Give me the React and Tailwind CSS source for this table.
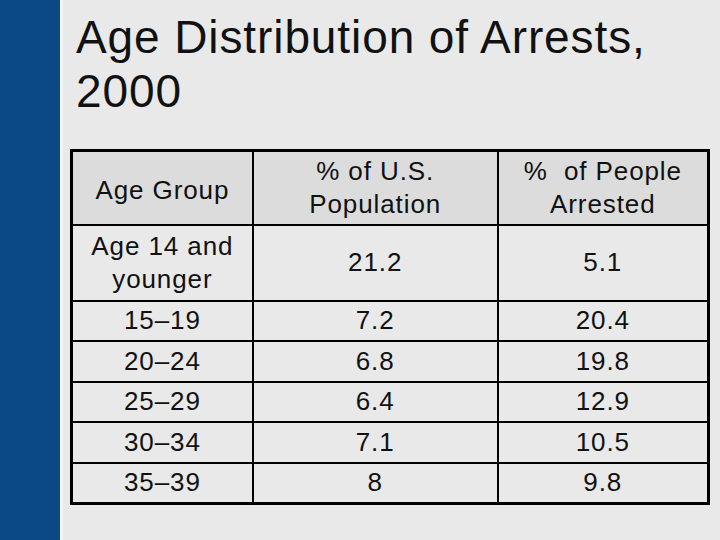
import React from 'react';

const rows = [
  ['Age 14 and younger', '21.2', '5.1'],
  ['15–19', '7.2', '20.4'],
  ['20–24', '6.8', '19.8'],
  ['25–29', '6.4', '12.9'],
  ['30–34', '7.1', '10.5'],
  ['35–39', '8', '9.8'],
];

const App = () => {
  return (
    <div className="flex w-[720px] h-[540px] overflow-hidden bg-[#e9e9e9] font-['Liberation_Sans',Arial,sans-serif] text-[#111]">
      {/* Side bar */}
      <div className="w-[60px] h-full bg-[#0b4886]" />
      <div className="w-[3px] h-full bg-[#f4f4f4]" />

      <div className="flex-1 flex flex-col pl-[7px]">
        <h1 className="mt-[10px] ml-[6px] text-[46px] leading-[54px] font-normal tracking-[0.9px]">
          Age Distribution of Arrests,
          <br />
          2000
        </h1>

        <table className="mt-[31px] w-[640px] border-collapse border-[3px] border-black text-[26px] leading-[33px] tracking-[0.9px] text-center">
          <colgroup>
            <col className="w-[182px]" />
            <col className="w-[246px]" />
            <col className="w-[212px]" />
          </colgroup>
          <thead>
            <tr className="h-[74px] bg-[#dcdcdc]">
              <th className="border-2 border-black font-normal pt-[6px]">Age Group</th>
              <th className="border-2 border-black font-normal">
                % of U.S.
                <br />
                Population
              </th>
              <th className="border-2 border-black font-normal">
                % &nbsp;of People
                <br />
                Arrested
              </th>
            </tr>
          </thead>
          <tbody>
            {rows.map((r, i) => (
              <tr key={i} className={i === 0 ? 'h-[76px]' : 'h-[40.6px]'}>
                <td className="border-2 border-black px-1">{r[0]}</td>
                <td className="border-2 border-black">{r[1]}</td>
                <td className="border-2 border-black">{r[2]}</td>
              </tr>
            ))}
          </tbody>
        </table>
      </div>
    </div>
  );
};

export default App;
